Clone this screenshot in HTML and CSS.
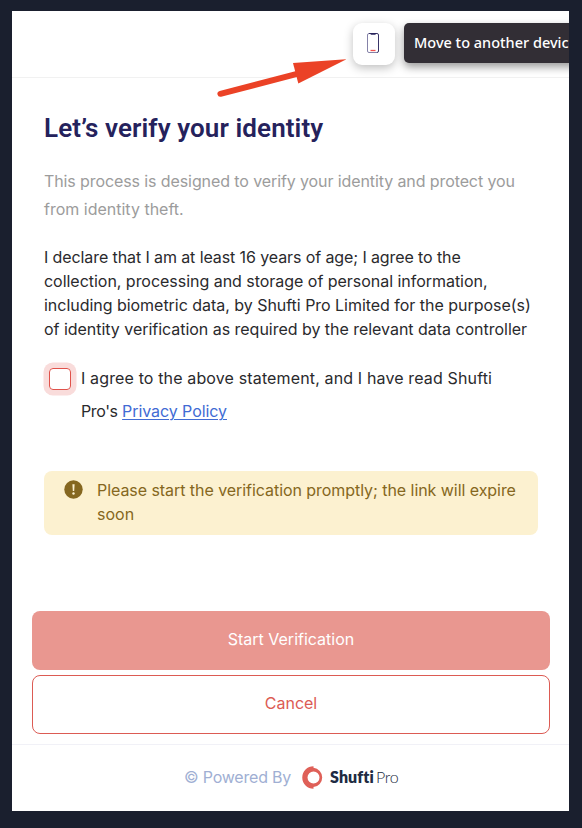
FILE: index.html
```html
<!DOCTYPE html>
<html lang="en">
<head>
<meta charset="utf-8">
<title>Verify your identity</title>
<link rel="stylesheet" href="styles.css">
</head>
<body>
<main class="card">
  <header class="topbar">
    <button class="device" aria-label="Move to another device">
      <svg width="14" height="22" viewBox="0 0 14 22" fill="none">
        <path d="M3.500 1.500H3Q1.500 1.500 1.500 3V19Q1.500 20.500 3 20.500H11" stroke="#8582a8"/>
        <path d="M3 1.500H11Q12.500 1.500 12.500 3V19Q12.500 20.500 11 20.500" stroke="#393568"/>
        <path d="M4.500 1H9.800V2Q9.800 2.800 9 2.800H5.300Q4.500 2.800 4.500 2Z" fill="#29255c"/>
        <path d="M4.500 18.500H9.500" stroke="#f0504e" stroke-width="1.300"/>
      </svg>
    </button>
    <div class="tooltip">Move to another device</div>
    <svg class="arrow" width="134" height="46" viewBox="0 0 134 46">
      <path d="M8.400 37.800L86 17.600" stroke="#eb4226" stroke-width="6" stroke-linecap="round"/>
      <path d="M134.500 3.200L81 7L86.300 27.500Z" fill="#eb4226"/>
    </svg>
  </header>
  <section class="content">
    <h1>Let’s verify your identity</h1>
    <p class="intro"><span class="tight-l">This process is designed to verify your identity and protect you</span><br>from identity theft.</p>
    <p class="statement"><span class="tight-l">I declare that I am at least 16 years of age; I agree to the</span><br><span class="tight-s">collection, processing and storage of personal information,</span><br><span class="tight-s">including biometric data, by Shufti Pro Limited for the purpose(s)</span><br><span class="tight-s">of identity verification as required by the relevant data controller</span></p>
    <div class="agree">
      <span class="checkbox" role="checkbox" aria-checked="false"></span>
      <p><span class="loose">I agree to the above statement, and I have read Shufti</span><br><span class="tight-xl">Pro's</span> <a href="#">Privacy Policy</a></p>
    </div>
    <div class="notice">
      <svg width="19" height="19" viewBox="0 0 19 19">
        <circle cx="9.500" cy="9.500" r="9.200" fill="#856720"/>
        <path d="M8.400 4.300H10.600L10.200 11H8.800Z" fill="#fcf1d0"/>
        <circle cx="9.500" cy="13.500" r="1.200" fill="#fcf1d0"/>
      </svg>
      <p><span class="tight-m">Please start the verification promptly; the link will expire</span><br>soon</p>
    </div>
  </section>
  <div class="actions">
    <button class="btn primary">Start Verification</button>
    <button class="btn outline">Cancel</button>
  </div>
  <footer class="footer">
    <span class="powered">© Powered By</span>
    <svg class="mark" width="21" height="23" viewBox="0 0 21 23">
      <path fill-rule="evenodd" fill="#df6058" d="M11.500 .2V1.800A9.700 9.700 0 0 1 11.500 21.100V22.700A11.250 11.250 0 0 1 11.500 .2ZM11.500 5.500A6 6 0 1 0 11.500 17.500A6 6 0 1 0 11.500 5.500Z"/>
    </svg>
    <span class="brand"><b>Shufti</b><i>Pro</i></span>
  </footer>
</main>
</body>
</html>
```
FILE: styles.css
```css
* { box-sizing: border-box; }
body {
  margin: 0;
  padding: 11px 13px 17px 12px;
  height: 828px;
  background: #1a1f2e;
  font-family: Inter, "Liberation Sans", sans-serif;
  font-size: 16px;
  color: #2a2a2d;
}
h1, p { margin: 0; white-space: nowrap; }
button { font: inherit; padding: 0; }
.card {
  height: 800px;
  background: #fff;
  overflow: hidden;
  display: flex;
  flex-direction: column;
}
.topbar {
  position: relative;
  height: 67px;
  flex: none;
  display: flex;
  align-items: flex-start;
  gap: 9px;
  padding: 12px 0 0 341px;
  border-bottom: 1px solid #f1f1f1;
}
.device {
  width: 42px;
  height: 42px;
  flex: none;
  display: flex;
  align-items: center;
  justify-content: center;
  padding-right: 2px;
  padding-bottom: 2px;
  border: 0;
  border-radius: 9px;
  background: #fff;
  box-shadow: 0 3px 10px rgba(0, 0, 0, .25);
}
.tooltip {
  width: 177px;
  height: 40px;
  flex: none;
  padding-left: 10px;
  border-radius: 5px;
  background: #322e35;
  color: #fff;
  font: 500 14.500px/39px "Noto Sans", sans-serif;
  white-space: nowrap;
  box-shadow: 0 4px 8px rgba(0, 0, 0, .4);
}
.arrow { position: absolute; left: 200px; top: 45px; }
.content { padding: 33px 31px 0 32px; flex: 1; }
h1 {
  font: 600 26px/34px Roboto, sans-serif;
  letter-spacing: .1px;
  color: #25225c;
}
.tight-s { letter-spacing: -.03px; }
.tight-m { letter-spacing: -.055px; }
.tight-l { letter-spacing: -.1px; }
.tight-xl { letter-spacing: -.4px; }
.loose { letter-spacing: .14px; }
.intro { margin-top: 22px; line-height: 28px; color: #9c9c9c; }
.statement { margin-top: 22px; line-height: 24px; }
.agree { display: flex; margin-top: 21px; line-height: 33px; }
.checkbox {
  width: 22px;
  height: 22px;
  flex: none;
  margin: 6px 10px 0 5px;
  border: 1px solid #e0524b;
  border-radius: 4px;
  box-shadow: 0 0 0 5.500px #f9dcdb;
}
.agree a { color: #416bd4; letter-spacing: -.07px; text-decoration-thickness: 1px; text-underline-offset: 2px; }
.notice {
  display: flex;
  gap: 14px;
  height: 64px;
  margin-top: 43px;
  padding: 7px 20px;
  border-radius: 8px;
  background: #fcf1d0;
  color: #856720;
  line-height: 24px;
}
.notice svg { flex: none; margin-top: 2px; }
.actions { display: flex; flex-direction: column; gap: 5px; padding: 0 19px 10px 20px; }
.btn { height: 59px; border-radius: 8px; padding-bottom: 4px; }
.primary { border: 0; background: #e99790; color: #fff; }
.outline { border: 1px solid #dc5b54; background: #fff; color: #dc5b54; }
.footer {
  height: 67px;
  flex: none;
  display: flex;
  align-items: center;
  padding: 0 0 2px 172px;
  border-top: 1px solid #f1f1f7;
  white-space: nowrap;
}
.powered { width: 118px; color: #a0afd3; letter-spacing: -.2px; }
.mark { flex: none; }
.brand {
  display: flex;
  gap: 2px;
  margin-left: 7px;
  font: 16px/20px Lato, sans-serif;
  color: #202b43;
}
.brand b { font-weight: 800; letter-spacing: .1px; }
.brand i { font-style: normal; font-weight: 300; letter-spacing: -.2px; }
```
